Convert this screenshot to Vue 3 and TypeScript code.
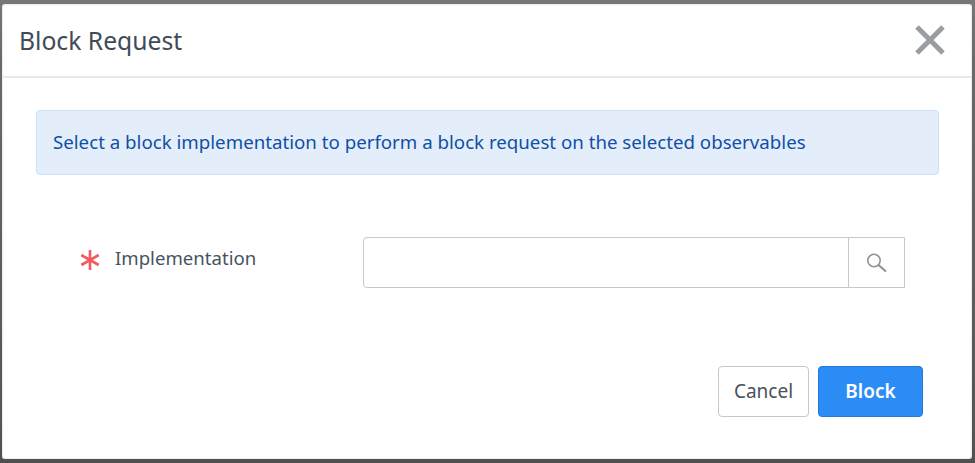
<script setup lang="ts">
const title: string = 'Block Request'
</script>

<template>
  <div class="backdrop">
    <section class="dialog">
      <header class="head">
        <h1 class="title">{{ title }}</h1>
        <svg class="close" width="32" height="32" viewBox="0 0 32 32">
          <path d="M3 3 L29 29 M29 3 L3 29" stroke="#9a9da1" stroke-width="5" fill="none" />
        </svg>
      </header>
      <div class="body">
        <div class="alert">Select a block implementation to perform a block request on the selected observables</div>
        <div class="row">
          <div class="label">
            <svg class="req" width="22" height="22" viewBox="0 0 22 22">
              <path d="M11 1 V21 M2.3 6 L19.7 16 M19.7 6 L2.3 16" stroke="#f4595f" stroke-width="2.6" fill="none" />
            </svg>
            <span>Implementation</span>
          </div>
          <div class="lookup">
            <div class="input"></div>
            <div class="search">
              <svg width="22" height="22" viewBox="0 0 22 22">
                <circle cx="8" cy="8.5" r="6.2" stroke="#8f9397" stroke-width="1.6" fill="none" />
                <path d="M12.5 13 L20 19.5" stroke="#8f9397" stroke-width="2.2" fill="none" />
              </svg>
            </div>
          </div>
        </div>
      </div>
      <footer class="foot">
        <button class="btn cancel">Cancel</button>
        <button class="btn primary">Block</button>
      </footer>
    </section>
  </div>
</template>

<style>
html, body { margin: 0; background: #555; }
</style>

<style scoped>
.backdrop {
  width: 975px;
  height: 463px;
  box-sizing: border-box;
  padding: 4px 3px 4px 2px;
  background: linear-gradient(#777 0, #6a6a6a 60px, #555 430px, #4f4f4f 100%);
  font-family: "Noto Sans", "Open Sans", sans-serif;
  overflow: hidden;
}
.dialog {
  height: 455px;
  box-sizing: border-box;
  background: #fff;
  border-radius: 3px;
  display: flex;
  flex-direction: column;
  box-shadow: 0 0 2px #bbb inset;
}
.head {
  height: 74px;
  box-sizing: border-box;
  flex: none;
  display: flex;
  align-items: center;
  justify-content: space-between;
  padding: 0 26px 0 17px;
  border-bottom: 2px solid #e8e9ea;
}
.title {
  margin: 0;
  font-size: 24.7px;
  font-weight: 400;
  color: #3f4b57;
}
.close { display: block; margin-top: -1px; }
.body {
  flex: 1;
  padding: 32px 33px 0 34px;
}
.alert {
  height: 65px;
  box-sizing: border-box;
  display: flex;
  align-items: center;
  padding: 0 16px 2px;
  background: #e3eefa;
  border: 1px solid #c8e0f8;
  border-radius: 4px;
  color: #0f4fa8;
  font-size: 18.7px;
}
.row {
  margin: 62px 34px 0 43px;
  display: flex;
  align-items: center;
  justify-content: space-between;
}
.label {
  display: flex;
  align-items: center;
  gap: 14px;
  margin-bottom: 10px;
  font-size: 18.6px;
  color: #47525e;
}
.req { display: block; margin-bottom: -4px; }
.lookup {
  width: 542px;
  height: 51px;
  box-sizing: border-box;
  display: flex;
  border: 1px solid #c5c8cc;
  border-radius: 4px 0 0 4px;
}
.input { flex: 1; }
.search {
  width: 55px;
  flex: none;
  display: flex;
  align-items: center;
  justify-content: center;
  border-left: 1px solid #c5c8cc;
}
.foot {
  display: flex;
  justify-content: flex-end;
  gap: 9px;
  padding: 0 49px 42px 0;
}
.btn {
  height: 51px;
  box-sizing: border-box;
  border-radius: 4px;
  font-family: inherit;
  font-size: 19px;
  padding: 0 0 2px;
}
.cancel {
  width: 91px;
  background: #fff;
  border: 1px solid #c5c8cc;
  color: #47525e;
}
.primary {
  width: 105px;
  background: #2b8cf5;
  border: 1px solid #2379d8;
  color: #fff;
  font-weight: 600;
}
</style>
